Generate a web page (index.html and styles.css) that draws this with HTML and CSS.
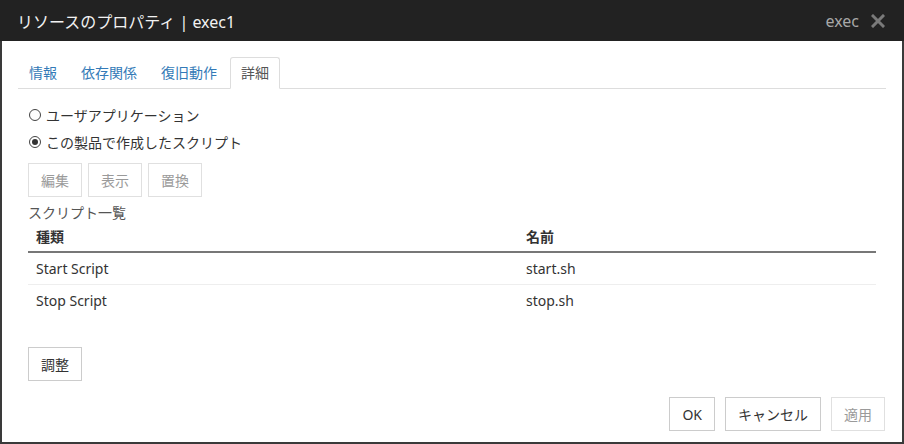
FILE: index.html
```html
<!DOCTYPE html>
<html lang="ja">
<head>
    <meta charset="UTF-8">
    <title>リソースのプロパティ</title>
    <link rel="stylesheet" href="styles.css">
</head>
<body>

    <div class="dialog">

        <!-- title bar -->
        <div class="dialog-header">
            <span class="dialog-title">リソースのプロパティ | exec1</span>
            <span class="dialog-type">exec</span>
            <svg class="close-icon" width="14" height="14" viewBox="0 0 14 14">
                <path d="M2 2 L12 12 M12 2 L2 12" stroke="#7a7a7a" stroke-width="3" stroke-linecap="square"/>
            </svg>
        </div>

        <div class="dialog-body">
            <ul class="nav-tabs">
                <li><a>情報</a></li>
                <li><a>依存関係</a></li>
                <li><a>復旧動作</a></li>
                <li class="active"><a>詳細</a></li>
            </ul>

            <div class="tab-pane">
                <label class="radio-row"><span class="radio"></span>ユーザアプリケーション</label>
                <label class="radio-row"><span class="radio checked"></span>この製品で作成したスクリプト</label>

                <div class="btn-group">
                    <button class="btn" disabled>編集</button>
                    <button class="btn" disabled>表示</button>
                    <button class="btn" disabled>置換</button>
                </div>

                <div class="section-label">スクリプト一覧</div>
                <table class="script-table">
                    <thead>
                        <tr>
                            <th class="col-type">種類</th>
                            <th>名前</th>
                        </tr>
                    </thead>
                    <tbody>
                        <tr>
                            <td>Start Script</td>
                            <td>start.sh</td>
                        </tr>
                        <tr>
                            <td>Stop Script</td>
                            <td>stop.sh</td>
                        </tr>
                    </tbody>
                </table>

                <button class="btn adjust-btn">調整</button>
            </div>
        </div>

        <div class="dialog-footer">
            <button class="btn">OK</button>
            <button class="btn">キャンセル</button>
            <button class="btn" disabled>適用</button>
        </div>

    </div>

</body>
</html>
```

FILE: styles.css
```css
* {
    box-sizing: border-box;
}

body {
    margin: 0;
    background: #fff;
    font-family: "Noto Sans", "Noto Sans CJK JP", sans-serif;
    font-size: 14px;
    color: #333;
}

.dialog {
    width: 904px;
    height: 444px;
    border: 2px solid #3a3a3a;
    border-top: 0;
    display: flex;
    flex-direction: column;
}

.dialog-header {
    height: 41px;
    margin: 0 -2px;
    background: #222;
    display: flex;
    align-items: center;
    padding: 0 19px 0 17px;
}

.dialog-title {
    flex: 1;
    color: #f2f2f2;
    font-size: 16px;
}

.dialog-type {
    color: #a8a8a8;
    font-size: 16px;
    margin-right: 12px;
}

.dialog-body {
    flex: 1;
    padding: 16px 16px 0;
}

/* tabs */
.nav-tabs {
    list-style: none;
    margin: 0;
    padding: 0;
    display: flex;
    border-bottom: 1px solid #ddd;
}

.nav-tabs li {
    margin-right: 2px;
    margin-bottom: -1px;
}

.nav-tabs a {
    display: block;
    height: 32px;
    line-height: 30px;
    padding: 0 10px;
    color: #337ab7;
    border: 1px solid transparent;
    border-radius: 3px 3px 0 0;
}

.nav-tabs .active a {
    color: #555;
    background: #fff;
    border-color: #ddd;
    border-bottom-color: #fff;
}

.tab-pane {
    padding: 16px 10px 0;
}

.radio-row {
    display: flex;
    align-items: center;
    height: 20px;
    margin-bottom: 7px;
}

.radio {
    width: 12px;
    height: 12px;
    border: 1px solid #444;
    border-radius: 50%;
    margin: 0 5px 0 1px;
    display: flex;
    align-items: center;
    justify-content: center;
}

.radio.checked::after {
    content: "";
    width: 6px;
    height: 6px;
    border-radius: 50%;
    background: #333;
}

.btn-group {
    display: flex;
    gap: 6px;
    margin-top: 11px;
}

.btn {
    height: 34px;
    padding: 0 12px;
    font-family: inherit;
    font-size: 14px;
    color: #333;
    background: #fff;
    border: 1px solid #ccc;
    border-radius: 0;
}

.btn:disabled {
    color: #9a9a9a;
    border-color: #e0e0e0;
}

.section-label {
    margin-top: 6px;
    line-height: 20px;
    color: #555;
}

.script-table {
    width: 100%;
    border-collapse: collapse;
    margin-top: 4px;
}

.script-table th {
    text-align: left;
    font-weight: bold;
    padding: 0 8px 4px;
    line-height: 20px;
    border-bottom: 2px solid #777;
}

.script-table .col-type {
    width: 490px;
}

.script-table td {
    height: 33px;
    padding: 0 8px;
    border-top: 1px solid #eee;
}

.script-table tbody tr:first-child td {
    border-top: 0;
    height: 32px;
}

.adjust-btn {
    margin-top: 30px;
}

.dialog-footer {
    display: flex;
    justify-content: flex-end;
    gap: 10px;
    padding: 0 17px 11px;
}
```
